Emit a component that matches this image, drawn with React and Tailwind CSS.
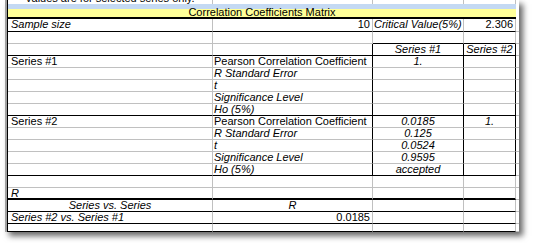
// Spreadsheet-style correlation matrix report
const RIGHT = {
  g: 'border-r border-r-[#c0c0c0]',
  k: 'border-r border-r-black',
}
const BOTTOM = {
  g: 'border-b border-b-[#c0c0c0]',
  k: 'border-b border-b-black',
  k2: 'border-b-2 border-b-black',
  n: '',
}
const ALIGN = {
  l: 'justify-start pl-[3px]',
  b: 'justify-start pl-[1px]',
  c: 'justify-center',
  r: 'justify-end pr-[2px]',
}
const HEIGHT = {
  13: 'h-[13px]',
  12: 'h-[12px]',
  8: 'h-[8px]',
}

const g4 = ['g', 'g', 'g', 'g']
const box = ['g', 'k', 'k', 'k']
const k4 = ['k', 'k', 'k', 'k']

// each row: height, right borders per column, bottom borders per column, cells
const rows = [
  { h: 13, r: g4, b: k4, cells: [
    { t: 'Sample size', it: true },
    { t: '10', a: 'r' },
    { t: 'Critical Value(5%)', it: true, a: 'b' },
    { t: '2.306', a: 'r' },
  ] },
  { h: 12, r: g4, b: ['g', 'g', 'k', 'k'], cells: [] },
  { h: 12, r: box, b: k4, cells: [
    {}, {}, { t: 'Series #1', it: true, a: 'c' }, { t: 'Series #2', it: true, a: 'c' },
  ] },
  { h: 12, r: box, b: g4, cells: [{ t: 'Series #1' }, { t: 'Pearson Correlation Coefficient', a: 'b' }, { t: '1.', it: true, a: 'c' }] },
  { h: 12, r: box, b: g4, cells: [{}, { t: 'R Standard Error', it: true, a: 'b' }] },
  { h: 12, r: box, b: g4, cells: [{}, { t: 't', it: true, a: 'b' }] },
  { h: 12, r: box, b: g4, cells: [{}, { t: 'Significance Level', it: true, a: 'b' }] },
  { h: 12, r: box, b: k4, cells: [{}, { t: 'Ho (5%)', it: true, a: 'b' }] },
  { h: 12, r: box, b: g4, cells: [
    { t: 'Series #2' }, { t: 'Pearson Correlation Coefficient', a: 'b' },
    { t: '0.0185', it: true, a: 'c' }, { t: '1.', it: true, a: 'c' },
  ] },
  { h: 12, r: box, b: g4, cells: [{}, { t: 'R Standard Error', it: true, a: 'b' }, { t: '0.125', it: true, a: 'c' }] },
  { h: 12, r: box, b: g4, cells: [{}, { t: 't', it: true, a: 'b' }, { t: '0.0524', it: true, a: 'c' }] },
  { h: 12, r: box, b: g4, cells: [{}, { t: 'Significance Level', it: true, a: 'b' }, { t: '0.9595', it: true, a: 'c' }] },
  { h: 12, r: box, b: k4, cells: [{}, { t: 'Ho (5%)', it: true, a: 'b' }, { t: 'accepted', it: true, a: 'c' }] },
  { h: 12, r: g4, b: g4, cells: [] },
  { h: 12, r: g4, b: ['k2', 'k2', 'k2', 'k2'], cells: [{ t: 'R', it: true }] },
  { h: 12, r: g4, b: k4, cells: [
    { t: 'Series vs. Series', it: true, a: 'c' }, { t: 'R', it: true, a: 'c' },
  ] },
  { h: 12, r: g4, b: k4, cells: [
    { t: 'Series #2 vs. Series #1', it: true }, { t: '0.0185', a: 'r' },
  ] },
  { h: 8, r: g4, b: k4, cells: [] },
]

const COLS = 'grid grid-cols-[205px_160px_91px_52px_3px]'

function Row({ row }) {
  return (
    <div className={COLS}>
      {[0, 1, 2, 3].map((i) => {
        const c = row.cells[i] || {}
        return (
          <div
            key={i}
            className={`${HEIGHT[row.h]} ${RIGHT[row.r[i]]} ${BOTTOM[row.b[i]]} ${ALIGN[c.a || 'l']} flex items-start overflow-visible whitespace-nowrap leading-[11px] ${c.it ? 'italic' : ''}`}
          >
            {c.t}
          </div>
        )
      })}
      <div className={`${HEIGHT[row.h]} border-b border-b-[#c0c0c0]`} />
    </div>
  )
}

export default function App() {
  return (
    <div className="w-[535px] h-[243px] bg-white overflow-hidden pl-[5px] font-['Liberation_Sans',Arial,sans-serif] text-[11px] text-black">
      <div className="w-[514px] h-[232px] bg-white border-l-2 border-l-[#a0a0a0] shadow-[4px_4px_6px_rgba(0,0,0,0.6)]">
        <div className="border-l border-l-black h-full">
          {/* row above the title, scrolled mostly out of view */}
          <div className={`${COLS} h-[4px] overflow-hidden`}>
            <div className="border-r border-r-[#c0c0c0] pl-[17px] whitespace-nowrap leading-[11px] -mt-[7px]">
              Values are for selected series only.
            </div>
            <div className="border-r border-r-[#c0c0c0]" />
            <div className="border-r border-r-[#c0c0c0]" />
            <div className="border-r border-r-[#c0c0c0]" />
            <div />
          </div>

          {/* title band */}
          <div className="h-[15px] w-[508px] border-b-2 border-b-black bg-[linear-gradient(to_bottom,#c4d9f3_5px,#ffff99_5px)] flex justify-center leading-[11px] pt-[3px] whitespace-nowrap">
            Correlation Coefficients Matrix
          </div>

          {rows.map((row, i) => (
            <Row key={i} row={row} />
          ))}
        </div>
      </div>
    </div>
  )
}
